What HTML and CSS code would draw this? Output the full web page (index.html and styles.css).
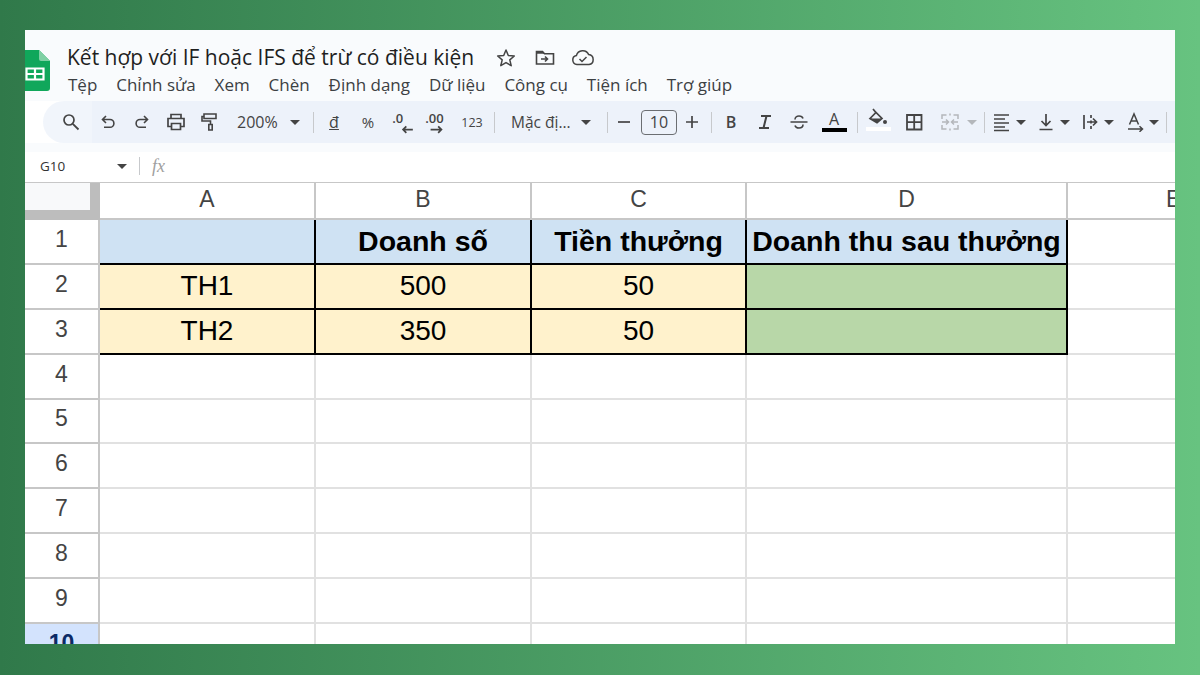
FILE: index.html
```html
<!DOCTYPE html>
<html lang="vi">
<head>
<meta charset="utf-8">
<title>Kết hợp với IF hoặc IFS để trừ có điều kiện</title>
<link rel="stylesheet" href="styles.css">
</head>
<body>
<main class="window">
  <header class="head">
    <svg class="logo" viewBox="0 0 33 41"><path d="M3 0h19l11 11v27a3 3 0 0 1-3 3H3a3 3 0 0 1-3-3V3a3 3 0 0 1 3-3z" fill="#10a75b"/><path d="M22 0l11 11h-9a2 2 0 0 1-2-2z" fill="#7fd0a4"/><path d="M9.5 18.5h17v11h-17zM18 18.5v11M9.500 24h17" fill="none" stroke="#fff" stroke-width="2.200"/></svg>
    <div class="head-text">
      <div class="title-row">
        <h1 class="title">Kết hợp với IF hoặc IFS để trừ có điều kiện</h1>
        <svg class="title-icon star" viewBox="0 0 20 20"><path d="M10 2l2.300 5.500 6 .5-4.500 3.900 1.400 5.800L10 14.600l-5.200 3.100 1.400-5.800L1.700 8l6-.5z" fill="none" stroke="#444" stroke-width="1.500" stroke-linejoin="round"/></svg>
        <svg class="title-icon folder" viewBox="0 0 20 20"><path d="M1.500 16V3.500h6l2 2.200h9V16z" fill="none" stroke="#444" stroke-width="1.600"/><path d="M1.500 3.500h6l2 2.200h-8z" fill="#444"/><path d="M6 11h6M10 8.500l2.500 2.500L10 13.500" fill="none" stroke="#444" stroke-width="1.600"/></svg>
        <svg class="title-icon cloud" viewBox="0 0 24 20"><path d="M6 16.500a4.500 4.500 0 0 1-.6-8.900A6.500 6.500 0 0 1 17.700 6.600 5 5 0 0 1 18 16.500z" fill="none" stroke="#444" stroke-width="1.500"/><path d="M8.500 11l2.500 2.500 4.500-4.500" fill="none" stroke="#444" stroke-width="1.500"/></svg>
      </div>
      <nav class="menu">
        <span>Tệp</span><span>Chỉnh sửa</span><span>Xem</span><span>Chèn</span><span>Định dạng</span><span>Dữ liệu</span><span>Công cụ</span><span>Tiện ích</span><span>Trợ giúp</span>
      </nav>
    </div>
  </header>

  <div class="toolbar">
    <div class="tb tb-search"><svg class="ic" viewBox="0 0 20 20"><circle cx="8" cy="8" r="5" fill="none" stroke="#444" stroke-width="1.700"/><path d="M11.800 11.800L17.500 17.500" stroke="#444" stroke-width="1.800"/></svg></div>
    <div class="tb ml2"><svg class="ic" viewBox="0 0 20 20"><path d="M8 4L4.500 7.500 8 11M4.500 7.500H12a3.800 3.800 0 0 1 0 7.800H6" fill="none" stroke="#444" stroke-width="1.600"/></svg></div>
    <div class="tb"><svg class="ic" viewBox="0 0 20 20"><path d="M12 4l3.500 3.500L12 11M15.500 7.500H8a3.800 3.800 0 0 0 0 7.800h6" fill="none" stroke="#444" stroke-width="1.600"/></svg></div>
    <div class="tb"><svg class="ic" viewBox="0 0 20 20"><path d="M5 6V2.500h10V6M5 14.500H2V6.500h16v8h-3M5.500 11.500h9v6h-9z" fill="none" stroke="#444" stroke-width="1.700"/></svg></div>
    <div class="tb"><svg class="ic" viewBox="0 0 20 20"><path d="M4 2h12v4.500H4zM4 4.500H2V9h8.500v3.500M8.800 12.500h3.400v5.500H8.800z" fill="none" stroke="#444" stroke-width="1.600"/></svg></div>
    <div class="tb-zoom"><span>200%</span><i class="caret"></i></div>
    <i class="sep sep-a"></i>
    <div class="tb"><span class="dong">đ</span></div>
    <div class="tb"><span class="tb-text">%</span></div>
    <div class="tb"><svg class="ic ic-wide" viewBox="0 0 24 24"><text x="3" y="13" class="dec">.0</text><path d="M22 19h-9M16 16l-3 3 3 3" fill="none" stroke="#444" stroke-width="1.600"/></svg></div>
    <div class="tb"><svg class="ic ic-wide" viewBox="0 0 24 24"><text x="2" y="13" class="dec">.00</text><path d="M7 19h10M14 16l3 3-3 3" fill="none" stroke="#444" stroke-width="1.600"/></svg></div>
    <div class="tb tb-123"><span class="num123">123</span></div>
    <i class="sep sep-b"></i>
    <div class="tb-font"><span>Mặc đị...</span><i class="caret"></i></div>
    <i class="sep sep-c"></i>
    <div class="tb tb-minus"><svg class="ic" viewBox="0 0 20 20"><path d="M4 10h12" stroke="#444" stroke-width="1.700"/></svg></div>
    <div class="size-box">10</div>
    <div class="tb tb-plus"><svg class="ic" viewBox="0 0 20 20"><path d="M4 10h12M10 4v12" stroke="#444" stroke-width="1.700"/></svg></div>
    <i class="sep sep-d"></i>
    <div class="tb ml2"><b class="fmt-b">B</b></div>
    <div class="tb"><svg class="ic" viewBox="0 0 20 20"><path d="M6 4h10M4 16h10M11.500 4L8.500 16" fill="none" stroke="#444" stroke-width="2"/></svg></div>
    <div class="tb"><svg class="ic" viewBox="0 0 20 20"><path d="M1.500 10h17M6 7.500C6 5 8 4 10 4s3.500.8 4 2.500M14 12.500c0 2.500-2 3.500-4 3.500s-3.500-.8-4-2.500" fill="none" stroke="#444" stroke-width="1.600"/></svg></div>
    <div class="tb ml1 tb-color"><span class="color-a">A</span><i class="color-bar"></i></div>
    <i class="sep sep-e"></i>
    <div class="tb ml3 tb-color"><svg class="ic ic-fill" viewBox="0 0 22 20"><path d="M6 1l2.500 3M3 10.500L9 4.500l6 6-5 4.200z" fill="none" stroke="#444" stroke-width="1.700"/><path d="M3.500 10.500h11L10 14.500z" fill="#444"/><circle cx="18" cy="14" r="2" fill="#444"/></svg><i class="color-bar color-white"></i></div>
    <div class="tb ml2"><svg class="ic" viewBox="0 0 20 20"><path d="M3 3h14.500v14.500H3zM10.200 3v14.500M3 10.200h14.500" fill="none" stroke="#444" stroke-width="1.800"/></svg></div>
    <div class="tb ml2"><svg class="ic" viewBox="0 0 20 20"><path d="M6.500 3H2v4M2 13v4h4.500M13.500 3H18v4M18 13v4h-4.500M2 10h6M6 7.500L8.500 10 6 12.500M18 10h-6M14 7.500L11.500 10l2.500 2.500M10 1.500v2M10 16.500v2" fill="none" stroke="#b4b7bb" stroke-width="1.500"/></svg></div>
    <div class="tb-caret tb-caret-off"><i class="caret caret-off"></i></div>
    <i class="sep sep-f"></i>
    <div class="tb-narrow ml4"><svg class="ic" viewBox="0 0 20 20"><path d="M2 3h15M2 7h11M2 11h15M2 15h11M2 18.500h15" fill="none" stroke="#444" stroke-width="1.500"/></svg></div>
    <div class="tb-caret"><i class="caret"></i></div>
    <div class="tb-narrow ml6"><svg class="ic" viewBox="0 0 20 20"><path d="M10 2v11M5.500 9l4.500 4.500L14.500 9M3.500 17.500h13" fill="none" stroke="#444" stroke-width="1.700"/></svg></div>
    <div class="tb-caret"><i class="caret"></i></div>
    <div class="tb-narrow ml6"><svg class="ic" viewBox="0 0 20 20"><path d="M4 3v14M11 3v3M11 8.500v3M11 14v3M7 10h9M13 6.500l3.500 3.500-3.500 3.500" fill="none" stroke="#444" stroke-width="1.700"/></svg></div>
    <div class="tb-caret"><i class="caret"></i></div>
    <div class="tb-narrow ml7"><svg class="ic" viewBox="0 0 20 20"><path d="M4.500 12.500L9 2l4.500 10.500M6 9h6M3 17h14M14.500 14.200L17.500 17l-3 2.800" fill="none" stroke="#444" stroke-width="1.500"/></svg></div>
    <div class="tb-caret"><i class="caret"></i></div>
    <i class="sep sep-g"></i>
  </div>

  <div class="strip"></div>

  <div class="formula">
    <span class="cell-ref">G10</span>
    <i class="caret caret-ref"></i>
    <i class="sep sep-fx"></i>
    <span class="fx">fx</span>
  </div>

  <section class="sheet">
    <div class="corner"></div><div class="col">A</div><div class="col">B</div><div class="col">C</div><div class="col">D</div><div class="col col-e">E</div>

    <div class="rh">1</div><div class="c bg-blue bl-r bl-b"></div><div class="c bg-blue bl-r bl-b head-cell">Doanh số</div><div class="c bg-blue bl-r bl-b head-cell">Tiền thưởng</div><div class="c bg-blue bl-r bl-b head-cell">Doanh thu sau thưởng</div><div class="c"></div>
    <div class="rh">2</div><div class="c bg-yellow bl-r bl-b">TH1</div><div class="c bg-yellow bl-r bl-b">500</div><div class="c bg-yellow bl-r bl-b">50</div><div class="c bg-green bl-r bl-b"></div><div class="c"></div>
    <div class="rh">3</div><div class="c bg-yellow bl-r bl-b">TH2</div><div class="c bg-yellow bl-r bl-b">350</div><div class="c bg-yellow bl-r bl-b">50</div><div class="c bg-green bl-r bl-b"></div><div class="c"></div>
    <div class="rh">4</div><div class="c"></div><div class="c"></div><div class="c"></div><div class="c"></div><div class="c"></div>
    <div class="rh">5</div><div class="c"></div><div class="c"></div><div class="c"></div><div class="c"></div><div class="c"></div>
    <div class="rh">6</div><div class="c"></div><div class="c"></div><div class="c"></div><div class="c"></div><div class="c"></div>
    <div class="rh">7</div><div class="c"></div><div class="c"></div><div class="c"></div><div class="c"></div><div class="c"></div>
    <div class="rh">8</div><div class="c"></div><div class="c"></div><div class="c"></div><div class="c"></div><div class="c"></div>
    <div class="rh">9</div><div class="c"></div><div class="c"></div><div class="c"></div><div class="c"></div><div class="c"></div>
    <div class="rh rh-active">10</div><div class="c"></div><div class="c"></div><div class="c"></div><div class="c"></div><div class="c"></div>
  </section>
</main>
</body>
</html>
```
FILE: styles.css
```css
* { box-sizing: border-box; }
html, body { margin: 0; height: 100%; }
body {
  width: 1200px;
  height: 675px;
  padding: 30px 25px 31px;
  overflow: hidden;
  background: linear-gradient(90deg, #30794a 0%, #67c380 100%);
  font-family: "Liberation Sans", Arial, sans-serif;
}
.window {
  height: 100%;
  background: #fff;
  overflow: hidden;
  display: flex;
  flex-direction: column;
}
.head {
  height: 71px;
  flex: none;
  background: #f9fbfd;
  display: flex;
}
.logo {
  flex: none;
  width: 33px;
  height: 41px;
  margin: 20px 0 0 -8px;
}
.head-text { margin-left: 17px; }
.title-row {
  display: flex;
  align-items: center;
  height: 29px;
  margin-top: 13px;
}
.title {
  margin: 0;
  font: 400 21px/29px "Open Sans", sans-serif;
  color: #1f1f1f;
  white-space: nowrap;
}
.title-icon { flex: none; height: 20px; width: 20px; }
.star { margin-left: 22px; }
.folder { margin-left: 19px; }
.cloud { margin-left: 16px; width: 24px; }
.menu {
  display: flex;
  gap: 18.9px;
  margin: 1px 0 0 1px;
  font: 400 17px/24px "Open Sans", sans-serif;
  color: #3c4043;
  white-space: nowrap;
}
.toolbar {
  flex: none;
  display: flex;
  align-items: center;
  width: 1160px;
  height: 42px;
  margin-left: 18px;
  padding-left: 10px;
  background: linear-gradient(90deg, #f1f5fb 49px, #edf2fa 49px);
  border-radius: 21px 0 0 21px;
  color: #444;
  font-family: "Open Sans", sans-serif;
}
.tb, .tb-narrow, .tb-caret {
  flex: none;
  height: 42px;
  display: flex;
  align-items: center;
  justify-content: center;
}
.tb { width: 34px; }
.tb-narrow { width: 26px; }
.tb-caret { width: 12px; }
.tb-caret-off { width: 10px; }
.tb-search { width: 36px; }
.tb-123 { width: 38px; }
.tb-minus { width: 32px; }
.tb-plus { width: 30px; }
.ml1 { margin-left: 1px; }
.ml2 { margin-left: 2px; }
.ml3 { margin-left: 3px; }
.ml4 { margin-left: 4px; }
.ml6 { margin-left: 6px; }
.ml7 { margin-left: 7px; }
.ic { display: block; width: 20px; height: 20px; }
.ic-wide { width: 26px; height: 26px; }
.ic-fill { width: 22px; height: 20px; margin-top: -6px; }
.dec { font: 600 12px "Open Sans", sans-serif; fill: #444; }
.caret {
  display: block;
  width: 0;
  height: 0;
  border-left: 5px solid transparent;
  border-right: 5px solid transparent;
  border-top: 5px solid #444;
}
.caret-off { border-top-color: #b4b7bb; }
.sep {
  flex: none;
  display: block;
  width: 1px;
  height: 21px;
  background: #c7c9cc;
}
.sep-a { margin-left: 8px; margin-right: 3px; }
.sep-b { margin-left: 3px; }
.sep-c { margin-left: 7px; }
.sep-d { margin-left: 4px; }
.sep-e { margin-left: 6px; }
.sep-f { margin-left: 7px; }
.sep-g { margin-left: 6px; }
.tb-zoom, .tb-font {
  flex: none;
  display: flex;
  align-items: center;
  justify-content: space-between;
}
.tb-zoom { width: 78px; padding: 0 5px 0 10px; font-size: 16px; }
.tb-font { width: 105px; padding: 0 9px 0 16px; font-size: 15.5px; }
.dong { font-size: 16px; text-decoration: underline; }
.tb-text { font-size: 15px; }
.num123 { font-size: 12.5px; }
.size-box {
  flex: none;
  width: 36px;
  height: 25px;
  margin-left: 1px;
  border: 1px solid #6b6e72;
  border-radius: 4px;
  text-align: center;
  font-size: 16px;
  line-height: 23px;
}
.fmt-b { font: 600 16px "Open Sans", sans-serif; }
.tb-color {
  position: relative;
  flex-direction: column;
  gap: 0;
}
.color-a { font-size: 16px; line-height: 17px; margin-top: -2px; }
.color-bar {
  display: block;
  width: 25px;
  height: 4px;
  background: #000;
}
.color-white { background: #fff; margin-top: -1px; }
.strip { flex: none; height: 9px; background: #f9fbfd; }
.formula {
  flex: none;
  display: flex;
  align-items: center;
  height: 30px;
  padding-left: 15px;
  padding-bottom: 2px;
  background: #fff;
}
.cell-ref { width: 77px; font: 400 13.5px "Open Sans", sans-serif; color: #333; }
.caret-ref { margin-right: 12px; }
.sep-fx { height: 18px; }
.fx { margin-left: 12px; font: italic 18px "Liberation Serif", serif; color: #a0a0a0; }
.sheet {
  flex: none;
  display: grid;
  grid-template-columns: 75px 216px 216px 215px 321px 110px;
  grid-template-rows: 37px;
  grid-auto-rows: 44.875px;
  border-top: 1px solid #c7c7c7;
}
.corner {
  background: #f8f9fa;
  border-right: 10px solid #bdbdbd;
  border-bottom: 10px solid #bdbdbd;
}
.col {
  display: flex;
  align-items: center;
  justify-content: center;
  font-size: 23px;
  color: #444;
  border-right: 2px solid #c7c7c7;
  border-bottom: 2px solid #c7c7c7;
  padding-bottom: 2px;
}
.col-e { justify-content: flex-start; padding-left: 98px; border-right: 0; }
.rh {
  display: flex;
  align-items: center;
  justify-content: center;
  font-size: 23px;
  color: #444;
  padding-bottom: 4px;
  border-right: 2px solid #c7c7c7;
  border-bottom: 2px solid #c7c7c7;
}
.rh-active {
  background: #d3e3fd;
  color: #0b2a66;
  font-weight: 700;
}
.c {
  display: flex;
  align-items: center;
  justify-content: center;
  font-size: 28px;
  color: #000;
  border-right: 2px solid #e1e1e1;
  border-bottom: 2px solid #e1e1e1;
}
.bg-blue { background: #cfe2f3; }
.bg-yellow { background: #fff2cc; }
.bg-green { background: #b8d7a8; }
.bl-r { border-right-color: #000; }
.bl-b { border-bottom-color: #000; }
.head-cell { font-size: 28.5px; font-weight: 700; white-space: nowrap; }
```
